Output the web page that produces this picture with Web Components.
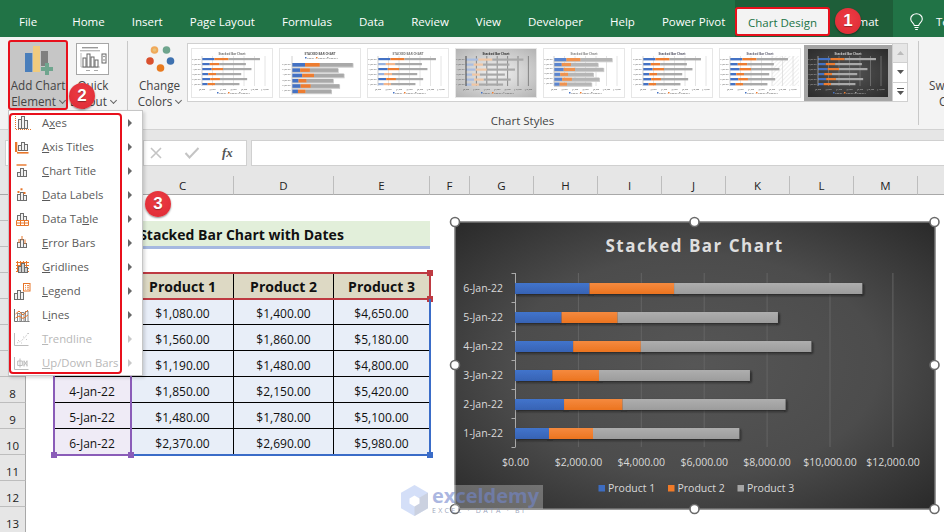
<!DOCTYPE html>
<html>
<head>
<meta charset="utf-8">
<title>Chart Design</title>
<style>
  html, body { margin: 0; padding: 0; width: 944px; height: 532px; overflow: hidden; background: #fff; }
  body { font-family: "Open Sans", "Liberation Sans", sans-serif; }
  u { text-underline-offset: 2px; }
</style>
</head>
<body>
<excel-app></excel-app>
<script>
const DATA = [
  ['1-Jan-22', 1080, 1400, 4650],
  ['2-Jan-22', 1560, 1860, 5180],
  ['3-Jan-22', 1190, 1480, 4800],
  ['4-Jan-22', 1850, 2150, 5420],
  ['5-Jan-22', 1480, 1780, 5100],
  ['6-Jan-22', 2370, 2690, 5980]
];
const money = n => '$' + n.toLocaleString('en-US', { minimumFractionDigits: 2 });

class TabItem extends HTMLElement {
  connectedCallback() {
    this.attachShadow({ mode: 'open' });
    this.shadowRoot.innerHTML = `
      <style>
        :host { display: block; color: #fff; font-size: 11.5px; line-height: 16px; white-space: nowrap; }
      </style>
      <slot></slot>`;
  }
}
customElements.define('tab-item', TabItem);

class RibbonTabs extends HTMLElement {
  connectedCallback() {
    this.attachShadow({ mode: 'open' });
    this.shadowRoot.innerHTML = `
      <style>
        :host { display: flex; height: 37px; background: #217346; align-items: stretch; }
        .tabs { display: flex; gap: 27px; padding: 14px 0 0 19px; width: 735px; box-sizing: border-box; flex: none; }
        .tabs tab-item:first-child { margin-right: 8px; }
        .ctx { display: flex; width: 158px; background: #1e5e39; padding-top: 7px; box-sizing: border-box; flex: none; }
        .active { width: 95px; height: 29px; box-sizing: border-box; background: #f3f3f3; border: 2px solid #e8101c; border-radius: 3px;
          color: #217346; font-size: 11.5px; display: flex; align-items: center; justify-content: center; flex: none; padding-top: 1px; }
        .fmt { color: #fff; font-size: 11.5px; padding: 7px 0 0 10px; line-height: 16px; }
        .tell { display: flex; flex: 1; padding: 13px 0 0 17px; gap: 13px; color: #fff; font-size: 11.5px; white-space: nowrap; overflow: hidden; }
        .tell svg { flex: none; }
        .tell span { padding-top: 1px; line-height: 16px; }
      </style>
      <div class="tabs">
        <tab-item>File</tab-item><tab-item>Home</tab-item><tab-item>Insert</tab-item>
        <tab-item>Page Layout</tab-item><tab-item>Formulas</tab-item><tab-item>Data</tab-item>
        <tab-item>Review</tab-item><tab-item>View</tab-item><tab-item>Developer</tab-item>
        <tab-item>Help</tab-item><tab-item>Power Pivot</tab-item>
      </div>
      <div class="ctx">
        <div class="active">Chart Design</div>
        <div class="fmt">Format</div>
      </div>
      <div class="tell">
        <svg width="13" height="18" viewBox="0 0 13 18" fill="none" stroke="#fff" stroke-width="1.100">
          <path d="M4.300 12.500c0-2.300-3.600-3.400-3.600-6.600a5.800 5.200 0 0 1 11.600 0c0 3.200-3.600 4.300-3.600 6.600z"/>
          <path d="M4.500 14.500h4M5.200 16.500h2.600"/>
        </svg>
        <span>Te</span>
      </div>`;
  }
}
customElements.define('ribbon-tabs', RibbonTabs);

class RibbonBtn extends HTMLElement {
  connectedCallback() {
    this.attachShadow({ mode: 'open' });
    this.shadowRoot.innerHTML = `
      <style>
        :host { display: flex; flex-direction: column; align-items: center; box-sizing: border-box; color: #444;
          font-size: 11.7px; line-height: 16px; height: 70px; margin-top: 3px; white-space: nowrap; flex: none; }
        :host([active]) { background: #c6c6c6; border: 2px solid #e8101c; border-radius: 3px; }
        .ico { height: 37px; display: flex; align-items: flex-start; justify-content: center; }
        :host([active]) .ico { height: 35px; }
        .txt { text-align: center; }
      </style>
      <div class="ico"><slot name="icon"></slot></div>
      <div class="txt"><slot></slot></div>`;
  }
}
customElements.define('ribbon-btn', RibbonBtn);

// tiny preview of the chart for the gallery
const THUMBS = {
  a: { x0: 10, k: .00525, top: 9, step: 5, bh: 2.2, title: '#777' },
  b: { x0: 12, k: .0055, top: 14, step: 5.300, bh: 3.600, title: '#555', shadow: 1, noGrid: 1 },
  c: { x0: 10, k: .00525, top: 9, step: 5, bh: 2.2, title: '#777' },
  d: { x0: 10, k: .0052, top: 9.500, step: 5, bh: 2.2, title: '#333' },
  e: { x0: 10, k: .00525, top: 9, step: 4.900, bh: 3.200, title: '#888', shadow: 1 },
  f: { x0: 11, k: .00525, top: 9, step: 5, bh: 2.400, title: '#556' },
  g: { x0: 10, k: .00525, top: 9, step: 5, bh: 2.400, title: '#667' },
  h: { x0: 10, k: .00525, top: 9, step: 5, bh: 2.200, title: '#ccc' }
};
class StyleThumb extends HTMLElement {
  connectedCallback() {
    this.attachShadow({ mode: 'open' });
    const v = this.getAttribute('variant') || 'a';
    const o = THUMBS[v], dark = v === 'h', grey = v === 'd';
    const title = this.getAttribute('label') || 'Stacked Bar Chart';
    const lc = dark ? '#bbb' : '#555';
    let s = '';
    if (!o.noGrid) {
      for (let i = 1; i <= 6; i++) {
        const gx = o.x0 + i * 2000 * o.k;
        s += `<line x1="${gx}" x2="${gx}" y1="7" y2="37" stroke="${dark ? '#6c6c6c' : grey ? '#666' : '#e4e4e4'}" stroke-width="${grey ? .7 : 1}"/>`;
      }
    }
    if (v === 'g') s += `<rect x="${o.x0 + 42}" y="7" width="27" height="30" fill="url(#hatch)"/>`;
    const cols = grey ? ['#a9bde0', '#f0c6a4', '#a8a8a8'] : v === 'e' ? ['#5b85cf', '#ef924f', '#b5b5b5'] : ['#4472c4', '#ed7d31', '#a9a9a9'];
    [...DATA].reverse().forEach((d, i) => {
      const y = o.top + i * o.step;
      let x = o.x0;
      s += `<text x="${o.x0 - 1.500}" y="${y + 1.600}" font-size="2.200" text-anchor="end" fill="${lc}">${d[0]}</text>`;
      if (o.shadow) s += `<rect x="${x}" y="${y + .3}" width="${(d[1] + d[2] + d[3]) * o.k + .8}" height="${o.bh + .8}" fill="#ccc"/>`;
      for (let j = 1; j <= 3; j++) {
        const w = d[j] * o.k;
        const op = v === 'c' && j < 3 && i % 2 ? .55 : 1;
        s += `<rect x="${x}" y="${y}" width="${w}" height="${o.bh}" fill="${cols[j - 1]}" opacity="${op}"/>`;
        x += w;
      }
    });
    s += `<line x1="${o.x0}" x2="${o.x0}" y1="7" y2="${v === 'b' ? 46 : 37}" stroke="${dark ? '#aaa' : grey ? '#222' : '#c4c4c4'}" stroke-width=".8"/>`;
    if (v !== 'b') {
      [0, 2, 4, 6, 8, 10, 12].forEach(t => {
        s += `<text x="${o.x0 + t * 1000 * o.k}" y="40.500" font-size="2" text-anchor="middle" fill="${lc}">$${t},000</text>`;
      });
    }
    const ly = v === 'b' ? 9.500 : 44.500;
    ['#4472c4', '#ed7d31', '#a5a5a5'].forEach((c, i) => {
      s += `<rect x="${25 + i * 11}" y="${ly - 1.500}" width="1.500" height="1.500" fill="${c}"/>
            <text x="${27 + i * 11}" y="${ly}" font-size="1.900" fill="${lc}">Product ${i + 1}</text>`;
    });
    const bg = dark ? 'url(#dk)' : grey ? 'url(#gr)' : '#fff';
    this.shadowRoot.innerHTML = `
      <style>
        :host { display: block; width: 80px; height: 48px; outline: 1px solid #e6e6e6; flex: none; overflow: hidden; }
        :host([selected]) { outline: 4px solid #a5a5a5; }
        svg { display: block; font-family: "Open Sans", sans-serif; filter: blur(.3px); }
      </style>
      <svg width="80" height="48" viewBox="0 0 80 48">
        <defs>
          <radialGradient id="dk" r=".7"><stop offset="0" stop-color="#555"/><stop offset="1" stop-color="#2c2c2c"/></radialGradient>
          <radialGradient id="gr" r=".7"><stop offset="0" stop-color="#f2f2f2"/><stop offset="1" stop-color="#b4b4b4"/></radialGradient>
          <pattern id="hatch" width="3" height="3" patternUnits="userSpaceOnUse" patternTransform="rotate(45)">
            <line x1="0" y1="0" x2="0" y2="3" stroke="#d0d0d0" stroke-width=".7"/>
          </pattern>
        </defs>
        <rect width="80" height="48" fill="${bg}"/>
        <text x="40" y="5.500" font-size="3" font-weight="700" text-anchor="middle" fill="${o.title}">${title}</text>
        ${s}
      </svg>`;
  }
}
customElements.define('style-thumb', StyleThumb);

class RibbonBar extends HTMLElement {
  connectedCallback() {
    this.attachShadow({ mode: 'open' });
    this.shadowRoot.innerHTML = `
      <style>
        :host { display: flex; height: 93px; background: #f3f3f3; border-bottom: 1px solid #d2d2d2; box-sizing: border-box; position: relative; }
        .sep { width: 1px; height: 84px; background: #c8c8c8; margin-top: 4px; flex: none; }
        .gallery-col { display: flex; flex-direction: column; width: 721px; flex: none; }
        .gallery { display: flex; height: 59px; margin-top: 6px; box-sizing: border-box; }
        .thumbs { display: flex; gap: 8px; align-items: center; padding-left: 4px; width: 706px; box-sizing: border-box; border: 1px solid #d0d0d0; background: #fff; flex: none; }
        .scroll { display: flex; flex-direction: column; width: 15px; border: 1px solid #d0d0d0; border-left: 0; box-sizing: border-box; flex: none; }
        .scroll div { flex: 1; display: flex; align-items: center; justify-content: center; border-bottom: 1px solid #d0d0d0; background: #fff; }
        .scroll div:first-child { background: #e6e6e6; }
        .scroll div:last-child { border-bottom: 0; }
        .lbl { font-size: 11.500px; color: #444; text-align: center; margin-top: 11px; line-height: 16px; padding-right: 50px; }
        .sw { font-size: 11.700px; line-height: 16px; color: #444; padding: 40px 0 0 10px; white-space: nowrap; }
        .sw span { padding-left: 10px; }
        .dn { display: inline-block; width: 4px; height: 4px; border: solid #666; border-width: 0 1px 1px 0; transform: rotate(45deg); margin: 0 0 3px 4px; }
      </style>
      <ribbon-btn active style="width:60px;margin-left:8px;">
        <svg slot="icon" width="40" height="36" viewBox="0 0 40 36">
          <rect x="7" y="11" width="7.300" height="19" fill="#4a7ebb"/>
          <rect x="15" y="4" width="7" height="26" fill="#f0cb7e"/>
          <rect x="23" y="9" width="7" height="15" fill="#7f7f7f"/>
          <path d="M27 21h4v4h4v4h-4v4h-4v-4h-4v-4h4z" fill="#6fa58e"/>
        </svg>
        Add Chart<br>Element<span class="dn"></span>
      </ribbon-btn>
      <ribbon-btn style="width:42px;margin-left:4px;">
        <svg slot="icon" width="34" height="34" viewBox="0 0 34 34" style="margin-top:3px">
          <rect x=".5" y=".5" width="32" height="31" fill="#fff" stroke="#a6a6a6"/>
          <rect x="6" y="4" width="16" height="1.400" fill="#999"/><rect x="4" y="7" width="20" height="1.400" fill="#bbb"/>
          <path d="M5 10v14h19" fill="none" stroke="#bbb"/>
          <g fill="#fff" stroke="#666"><rect x="7" y="15" width="3" height="9"/><rect x="11" y="11" width="3" height="13"/><rect x="15" y="14" width="3" height="10"/><rect x="19" y="17" width="3" height="7"/></g>
          <rect x="26" y="11" width="4" height="9" fill="#fff" stroke="#666"/><circle cx="28" cy="13.500" r=".7" fill="#555"/><circle cx="28" cy="17" r=".7" fill="#555"/>
          <rect x="10" y="27" width="4" height="1" fill="#aaa"/><rect x="18" y="27" width="4" height="1" fill="#aaa"/>
        </svg>
        Quick<br>Layout<span class="dn"></span>
      </ribbon-btn>
      <div class="sep" style="margin-left:13px"></div>
      <ribbon-btn style="width:55px;margin-left:4px;">
        <svg slot="icon" width="40" height="34" viewBox="0 0 40 34" style="margin-top:3px">
          <circle cx="14.500" cy="7" r="3.800" fill="#f0a95a"/><circle cx="14.500" cy="7" r="1.800" fill="#e8c27a"/>
          <circle cx="26.500" cy="7" r="3.800" fill="#6fa58e"/>
          <circle cx="10" cy="18" r="3.800" fill="#d9502e"/>
          <circle cx="30.500" cy="18" r="3.800" fill="#3f72b0"/>
          <circle cx="20.500" cy="25" r="3.800" fill="#e87a1f"/>
        </svg>
        Change<br>Colors<span class="dn"></span>
      </ribbon-btn>
      <div class="gallery-col">
        <div class="gallery">
          <div class="thumbs">
            <style-thumb variant="a" label="Stacked Bar Chart"></style-thumb>
            <style-thumb variant="b" label="STACKED BAR CHART"></style-thumb>
            <style-thumb variant="c" label="STACKED BAR CHART"></style-thumb>
            <style-thumb variant="d" label="Stacked Bar Chart"></style-thumb>
            <style-thumb variant="e" label="Stacked Bar Chart"></style-thumb>
            <style-thumb variant="f" label="Stacked Bar Chart"></style-thumb>
            <style-thumb variant="g" label="Stacked Bar Chart"></style-thumb>
            <style-thumb variant="h" selected label="Stacked Bar Chart"></style-thumb>
          </div>
          <div class="scroll">
            <div><svg width="7" height="4"><path d="M0 4h7L3.500 0z" fill="#bbb"/></svg></div>
            <div><svg width="7" height="4"><path d="M0 0h7L3.500 4z" fill="#555"/></svg></div>
            <div><svg width="7" height="7"><path d="M0 0h7v1H0zM0 3h7L3.500 7z" fill="#555"/></svg></div>
          </div>
        </div>
        <div class="lbl">Chart Styles</div>
      </div>
      <div class="sep" style="margin-left:10px"></div>
      <div class="sw">Sw<br><span>C</span></div>`;
  }
}
customElements.define('ribbon-bar', RibbonBar);

class FormulaBar extends HTMLElement {
  connectedCallback() {
    this.attachShadow({ mode: 'open' });
    this.shadowRoot.innerHTML = `
      <style>
        :host { display: flex; height: 46px; background: #e6e6e6; padding: 10px 0 10px 5px; box-sizing: border-box; gap: 4px; }
        .name { width: 132px; background: #fff; border: 1px solid #d0d0d0; box-sizing: border-box; }
        .btns { width: 104px; margin-left: 2px; background: #fff; border: 1px solid #d0d0d0; box-sizing: border-box; display: flex; align-items: center; padding-left: 5px; gap: 21px; }
        .input { flex: 1; background: #fff; border: 1px solid #d0d0d0; border-right: 0; box-sizing: border-box; }
        .fx { font: italic 700 13px "Liberation Serif", serif; color: #555; margin-left: 1px; }
      </style>
      <div class="name"></div>
      <div class="btns">
        <svg width="14" height="12" viewBox="0 0 14 12"><path d="M2 1l10 10M12 1L2 11" stroke="#c4c4c4" stroke-width="1.600" fill="none"/></svg>
        <svg width="16" height="12" viewBox="0 0 16 12"><path d="M1.500 6l4 4.500L14.500 1" stroke="#c4c4c4" stroke-width="2" fill="none"/></svg>
        <span class="fx">fx</span>
      </div>
      <div class="input"></div>`;
  }
}
customElements.define('formula-bar', FormulaBar);

class SheetGrid extends HTMLElement {
  connectedCallback() {
    this.attachShadow({ mode: 'open' });
    const cols = ['A', 'B', 'C', 'D', 'E', 'F', 'G', 'H', 'I', 'J', 'K', 'L', 'M', ''];
    let h = '<div class="ch corner"></div>';
    cols.forEach(c => { h += `<div class="ch">${c}</div>`; });
    for (let r = 1; r <= 13; r++) h += `<div class="rh" style="grid-area:${r + 1}/1">${r}</div>`;
    h += `<div class="title" style="grid-area:3/3/3/7">Stacked Bar Chart with Dates</div>`;
    h += `<div class="c hd" style="grid-area:5/3">Date</div>`;
    ['Product 1', 'Product 2', 'Product 3'].forEach((p, i) => {
      h += `<div class="c hd" style="grid-area:5/${4 + i}">${p}</div>`;
    });
    DATA.forEach((d, i) => {
      const row = 6 + i;
      h += `<div class="c dt ${i === 5 ? 'last' : ''}" style="grid-area:${row}/3">${d[0]}</div>`;
      for (let j = 1; j <= 3; j++) {
        h += `<div class="c v ${i === 5 ? 'last' : ''}" style="grid-area:${row}/${3 + j}">${money(d[j])}</div>`;
      }
    });
    this.shadowRoot.innerHTML = `
      <style>
        :host { display: grid; flex: 1; background: #fff; overflow: hidden;
          grid-template-columns: 26px 27px 79px 102px 100px 96px 40px 64px 64px 64px 64px 64px 64px 64px 64px;
          grid-template-rows: 19px repeat(13, 26px); font-size: 12px; color: #111; }
        .ch { background: #e6e6e6; border-right: 1px solid #bdbdbd; border-bottom: 1px solid #a8a8a8; box-sizing: border-box;
          display: flex; align-items: flex-end; justify-content: center; font-size: 11.500px; line-height: 16px; color: #222; }
        .rh { background: #e6e6e6; border-right: 1px solid #a8a8a8; border-bottom: 1px solid #bdbdbd; box-sizing: border-box;
          text-align: center; font-size: 11.500px; color: #222; padding-top: 8px; line-height: 17px; overflow: hidden; }
        .title { background: #e2efda; font-weight: 700; font-size: 14px; display: flex; align-items: center; justify-content: center;
          border-bottom: 3px solid #a5b8e0; height: 28px; box-sizing: border-box; padding-top: 2px; }
        .c { display: flex; align-items: center; justify-content: center; box-sizing: border-box; border-right: 1px solid #000; border-bottom: 1px solid #000; padding-top: 3px; }
        .hd { background: #ddd9c4; font-weight: 700; font-size: 14px; border-bottom: 0; padding-top: 1px; }
        .dt { background: #efebf6; }
        .v { background: #e8eef8; }
        .last { border-bottom: 0; }
        .sel { border: 2px solid; box-sizing: border-box; pointer-events: none; position: relative; z-index: 2; }
        .red { grid-area: 5/4/6/7; border-color: #be3a42; border-left: 0; margin: -1px -1px -1px 0; }
        .blue { grid-area: 6/4/12/7; border-color: #3a6cc8; border-top: 0; border-left: 0; margin: 0 -1px -1px 1px; }
        .purple { grid-area: 6/3/12/4; border-color: #8a5cb8; margin-bottom: -1px; }
        .sel i { position: absolute; width: 6px; height: 6px; }
        .red i { background: #be3a42; } .blue i { background: #3a6cc8; } .purple i { background: #8a5cb8; }
      </style>
      ${h}
      <div class="sel red"><i style="right:-4px;top:-4px"></i><i style="right:-4px;bottom:-4px"></i></div>
      <div class="sel blue"><i style="right:-4px;bottom:-4px"></i></div>
      <div class="sel purple"><i style="left:-4px;bottom:-4px"></i><i style="right:-4px;bottom:-4px"></i></div>`;
  }
}
customElements.define('sheet-grid', SheetGrid);

class StackedChart extends HTMLElement {
  connectedCallback() {
    this.attachShadow({ mode: 'open' });
    const x0 = 61.500, k = 62.900 / 2000, colors = ['url(#bl)', 'url(#or)', 'url(#gy)'];
    let grid = '', bars = '', cats = '', xl = '', ticks = '';
    for (let i = 0; i <= 6; i++) {
      const x = x0 + i * 62.900;
      if (i) grid += `<line x1="${x}" x2="${x}" y1="52" y2="226" stroke="#646464"/>`;
      xl += `<text x="${x}" y="245" text-anchor="middle">${money(i * 2000)}</text>`;
    }
    for (let i = 0; i <= 6; i++) {
      ticks += `<line x1="${x0 - 4}" x2="${x0}" y1="${52.500 + i * 29}" y2="${52.500 + i * 29}" stroke="#aaa"/>`;
    }
    [...DATA].reverse().forEach((d, i) => {
      const y = 62 + i * 29;
      let x = 61;
      cats += `<text x="49" y="${y + 9}" text-anchor="end">${d[0]}</text>`;
      bars += '<g filter="url(#sh)">';
      for (let j = 1; j <= 3; j++) {
        const w = d[j] * k;
        bars += `<rect x="${x}" y="${y}" width="${w}" height="11" fill="${colors[j - 1]}"/>`;
        x += w;
      }
      bars += '</g>';
    });
    const legend = [[144.500, '#3d6cc0', 'Product 1'], [214, '#f07a28', 'Product 2'], [283.500, '#a5a5a5', 'Product 3']]
      .map(([x, c, t]) => `<rect x="${x}" y="264" width="6.500" height="6.500" fill="${c}"/><text x="${x + 9.500}" y="271">${t}</text>`).join('');
    this.shadowRoot.innerHTML = `
      <style>
        :host { display: block; position: absolute; left: 454px; top: 221px; width: 482px; height: 289px; z-index: 3; }
        svg { display: block; overflow: visible; font-family: "Open Sans", sans-serif; font-size: 10.500px; fill: #d9d9d9; }
        .handle { fill: #fff; stroke: #6a6a6a; stroke-width: 1.600; }
      </style>
      <svg width="482" height="289" viewBox="0 0 482 289">
        <defs>
          <radialGradient id="bg" cx=".5" cy=".5" r=".7">
            <stop offset="0" stop-color="#565656"/><stop offset=".55" stop-color="#4c4c4c"/><stop offset="1" stop-color="#2a2a2a"/>
          </radialGradient>
          <linearGradient id="bl" x1="0" y1="0" x2="0" y2="1"><stop offset="0" stop-color="#4274cc"/><stop offset="1" stop-color="#3763b4"/></linearGradient>
          <linearGradient id="or" x1="0" y1="0" x2="0" y2="1"><stop offset="0" stop-color="#f58a3f"/><stop offset="1" stop-color="#ec7420"/></linearGradient>
          <linearGradient id="gy" x1="0" y1="0" x2="0" y2="1"><stop offset="0" stop-color="#aeaeae"/><stop offset="1" stop-color="#9c9c9c"/></linearGradient>
          <filter id="sh" x="-5%" y="-30%" width="110%" height="170%"><feDropShadow dx="1.500" dy="1.500" stdDeviation="1.200" flood-color="#111" flood-opacity=".7"/></filter>
        </defs>
        <rect x="1" y="1" width="480" height="287" fill="url(#bg)" stroke="#777" stroke-width="1.500"/>
        <text x="240.500" y="31" text-anchor="middle" font-size="17" font-weight="700" letter-spacing="1.500" fill="#dedede">Stacked Bar Chart</text>
        ${grid}${ticks}
        <line x1="${x0}" x2="${x0}" y1="52" y2="226" stroke="#aaa"/>
        ${bars}${cats}${xl}${legend}
        <circle class="handle" cx="1" cy="1" r="4.500"/><circle class="handle" cx="240.500" cy="1" r="4.500"/><circle class="handle" cx="480.500" cy="1" r="4.500"/>
        <circle class="handle" cx="1" cy="144" r="4.500"/><circle class="handle" cx="480.500" cy="144" r="4.500"/>
        <circle class="handle" cx="1" cy="288" r="4.500"/><circle class="handle" cx="240.500" cy="288" r="4.500"/><circle class="handle" cx="480.500" cy="288" r="4.500"/>
      </svg>`;
  }
}
customElements.define('stacked-chart', StackedChart);

const OR = '#e8762a', GR = '#6e6e6e';
const bar3 = (x, w, ys, base, fill = '#f2f2f2', st = GR) =>
  `<g fill="${fill}" stroke="${st}">` + ys.map((y, i) => `<rect x="${x + i * w + .5}" y="${y + .5}" width="${w}" height="${base - y}"/>`).join('') + '</g>';
const ICONS = {
  axes: bar3(4, 3, [5, 2, 6], 14) + `<path d="M1.500 2v13.500H17" fill="none" stroke="${OR}" stroke-dasharray="1 1"/>`,
  titles: bar3(4, 3, [7, 4, 6], 12) + `<rect x="1" y="4" width="2.300" height="10" fill="${OR}"/><rect x="3" y="14" width="11.500" height="1.600" fill="${OR}"/>`,
  ctitle: `<rect x="2.500" y="2.300" width="10" height="1.400" fill="${OR}"/>` + bar3(3, 3, [10, 6, 8], 14),
  labels: bar3(3, 3, [8, 6, 9], 14) + `<g fill="${OR}"><rect x="3.500" y="5" width="2" height="2"/><rect x="6.500" y="2.300" width="2" height="2"/><rect x="9.500" y="6" width="2" height="2"/></g>`,
  table: bar3(3, 3, [5, 3, 6], 10) + `<path d="M2.500 10.500h12v5h-12zM2.500 13h12M6.500 10.500v5M10.500 10.500v5" fill="none" stroke="${OR}"/>`,
  error: bar3(3, 3, [8, 5, 9], 13) + `<path d="M5 9V5M8 6.500V2M11 10V5.500" stroke="${OR}" fill="none"/>`,
  grid: `<path d="M2 4.500h13M2 7.500h13M2 10.500h13M2 13.500h13M3.500 3v11M6.500 3v11M9.500 3v11M12.500 3v11" stroke="${OR}" fill="none"/>` + bar3(4, 3, [8, 5, 9], 14, '#cfcfcf'),
  legend: bar3(0, 3, [11, 8, 10], 17) + `<rect x="9.500" y="1.500" width="6.500" height="7.500" fill="#fff" stroke="${OR}"/><path d="M11 3.500h1M13 3.500h2M11 5.300h1M13 5.300h2M11 7.200h1M13 7.200h2" stroke="${OR}" stroke-width=".8"/>`,
  lines: `<path d="M.5 3v12.500h15" fill="none" stroke="${GR}"/><g fill="none" stroke="#8a8a8a"><rect x="3.500" y="7.500" width="2.500" height="8"/><rect x="7.500" y="6.500" width="2.500" height="9"/><rect x="11.500" y="5.500" width="2.500" height="10"/></g><path d="M1.500 8l3.500-3 4 4 5-5M1.500 12l3.500-2 4 2.500 5-3.500" fill="none" stroke="${OR}"/>`,
  trend: `<path d="M.5 3v12.500h14" fill="none" stroke="#bcbcbc"/><path d="M3 13l4-2 4-3.500 3-4.500" fill="none" stroke="#c4c4c4" stroke-dasharray="1 1"/><path d="M4 10.500h.8M7 13h.8M9 7h.8M12 9.500h.8M14 3.500h.8" stroke="#bcbcbc"/>`,
  updown: `<path d="M.5 3v12.500h14" fill="none" stroke="#bcbcbc"/><path d="M6 4.500v9M3.700 7h4.600v4.500H3.700zM10 6.500v6M13 6.500v6M10 7l3 4.500M13 7l-3 4.500" fill="none" stroke="#bcbcbc"/>`
};

class MenuItem extends HTMLElement {
  connectedCallback() {
    this.attachShadow({ mode: 'open' });
    const dim = this.hasAttribute('disabled');
    this.shadowRoot.innerHTML = `
      <style>
        :host { display: flex; align-items: center; height: 24px; font-size: 11.3px; color: #5a5a5a; }
        :host([disabled]) { color: #b8b8b8; }
        .i { width: 18px; height: 18px; margin-left: 4px; flex: none; }
        .t { margin-left: 10px; flex: 1; white-space: nowrap; padding-bottom: 1px; }
        .a { width: 0; height: 0; border-left: 4px solid ${dim ? '#c8c8c8' : '#666'}; border-top: 4px solid transparent; border-bottom: 4px solid transparent; margin-right: 10px; }
      </style>
      <svg class="i" viewBox="0 0 18 18">${ICONS[this.getAttribute('icon')]}</svg>
      <span class="t"><slot></slot></span>
      <span class="a"></span>`;
  }
}
customElements.define('menu-item', MenuItem);

class ChartMenu extends HTMLElement {
  connectedCallback() {
    this.attachShadow({ mode: 'open' });
    this.shadowRoot.innerHTML = `
      <style>
        :host { display: block; position: absolute; left: 8px; top: 110px; width: 135px; height: 266px; box-sizing: border-box; background: #fff;
          border: 1px solid #c6c6c6; box-shadow: 2px 2px 3px rgba(0,0,0,.15); z-index: 4; padding-left: 1px; }
        .red { position: absolute; left: 0; top: 2px; width: 113px; height: 261px; box-sizing: border-box; border: 2px solid #e8101c; border-radius: 4px; pointer-events: none; }
      </style>
      <slot></slot>
      <div class="red"></div>`;
  }
}
customElements.define('chart-menu', ChartMenu);

class StepBadge extends HTMLElement {
  connectedCallback() {
    this.attachShadow({ mode: 'open' });
    this.shadowRoot.innerHTML = `
      <style>
        :host { position: absolute; width: 26px; height: 26px; border-radius: 50%; background: radial-gradient(circle at 50% 40%, #ee3c44, #dc2a34); color: #fff; z-index: 6;
          font: 700 17px/26px "Liberation Sans", sans-serif; text-align: center; box-shadow: 0 1px 2px rgba(0,0,0,.45); text-shadow: 0 1px 1px rgba(0,0,0,.35); }
      </style>
      <slot></slot>`;
  }
}
customElements.define('step-badge', StepBadge);

class WatermarkLogo extends HTMLElement {
  connectedCallback() {
    this.attachShadow({ mode: 'open' });
    this.shadowRoot.innerHTML = `
      <style>
        :host { position: absolute; left: 401px; top: 485px; width: 146px; height: 31px; z-index: 5; display: flex; gap: 4px; font-family: "Open Sans", sans-serif; }
        .patch { position: absolute; left: 53px; top: 0; width: 89px; height: 24px; background: rgba(255,255,255,.28); }
        .t { position: relative; color: rgba(115,135,205,.6); }
        .b { font-size: 20px; font-weight: 700; line-height: 21px; }
        .s { font-size: 7px; letter-spacing: 2.300px; line-height: 9px; color: rgba(130,140,170,.8); white-space: nowrap; }
      </style>
      <div class="patch"></div>
      <svg width="27" height="31" viewBox="0 0 27 31" style="position:relative">
        <path d="M13.500 0L27 7.700v15.500L13.500 31 0 23.200V7.700z" fill="#cdd9f7" opacity=".85"/>
        <path d="M13.500 15.500L27 7.700v15.500L13.500 31z" fill="#c9cfdc" opacity=".85"/>
        <path d="M13.500 10.500l5 3v5l-5 3-5-3v-5z" fill="#fff"/>
      </svg>
      <div class="t"><div class="b">exceldemy</div><div class="s">EXCEL · DATA · BI</div></div>`;
  }
}
customElements.define('watermark-logo', WatermarkLogo);

class ExcelApp extends HTMLElement {
  connectedCallback() {
    this.attachShadow({ mode: 'open' });
    this.shadowRoot.innerHTML = `
      <style>
        :host { display: flex; flex-direction: column; position: relative; width: 944px; height: 532px; overflow: hidden;
          font-family: "Open Sans", "Liberation Sans", sans-serif; }
      </style>
      <ribbon-tabs></ribbon-tabs>
      <ribbon-bar></ribbon-bar>
      <formula-bar></formula-bar>
      <sheet-grid></sheet-grid>
      <stacked-chart></stacked-chart>
      <watermark-logo></watermark-logo>
      <chart-menu>
        <menu-item icon="axes">A<u>x</u>es</menu-item>
        <menu-item icon="titles"><u>A</u>xis Titles</menu-item>
        <menu-item icon="ctitle"><u>C</u>hart Title</menu-item>
        <menu-item icon="labels"><u>D</u>ata Labels</menu-item>
        <menu-item icon="table">Data Ta<u>b</u>le</menu-item>
        <menu-item icon="error"><u>E</u>rror Bars</menu-item>
        <menu-item icon="grid"><u>G</u>ridlines</menu-item>
        <menu-item icon="legend"><u>L</u>egend</menu-item>
        <menu-item icon="lines">L<u>i</u>nes</menu-item>
        <menu-item icon="trend" disabled><u>T</u>rendline</menu-item>
        <menu-item icon="updown" disabled><u>U</u>p/Down Bars</menu-item>
      </chart-menu>
      <step-badge style="left:835px;top:8px">1</step-badge>
      <step-badge style="left:69px;top:83px">2</step-badge>
      <step-badge style="left:145px;top:191px">3</step-badge>`;
  }
}
customElements.define('excel-app', ExcelApp);
</script>
</body>
</html>
